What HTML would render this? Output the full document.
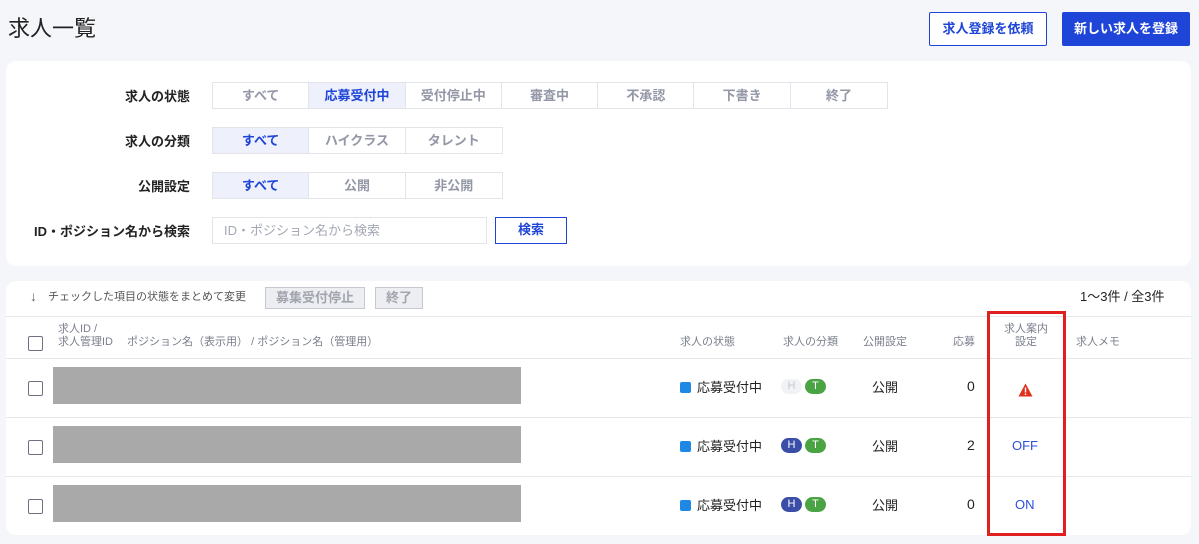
<!DOCTYPE html>
<html><head><meta charset="utf-8"><style>
*{box-sizing:border-box;margin:0;padding:0}
body{width:1199px;height:544px;background:#f5f6fa;font-family:"Liberation Sans","Noto Sans CJK JP",sans-serif;position:relative;overflow:hidden;color:#222;line-height:1.2}
.a{position:absolute}
.card{position:absolute;background:#fff;border-radius:10px;left:6px;width:1185px}
.lbl{position:absolute;right:1009px;font-size:13px;font-weight:bold;color:#222;text-align:right;white-space:nowrap}
.seg{position:absolute;left:212px;display:flex;border:1px solid #e2e4ea;height:27px}
.seg div{width:96.3px;border-right:1px solid #e2e4ea;font-size:13px;font-weight:bold;color:#9397a6;text-align:center;line-height:25px}
.seg div:last-child{border-right:none}
.seg .on{background:#eef1fb;color:#1f45d8}
.hd{position:absolute;font-size:11px;color:#7b7f8c;white-space:nowrap}
.cb{position:absolute;left:28px;width:15px;height:15px;border:1px solid #6e7280;border-radius:2px;background:#fff}
.gray{position:absolute;left:53px;width:468px;height:37px;background:#a9a9a9}
.line{position:absolute;left:6px;width:1185px;height:1px;background:#e6e8ee}
.cell{position:absolute;font-size:13px;color:#222;white-space:nowrap}
.sq{display:inline-block;width:11px;height:11px;background:#1e88e5;border-radius:2px;margin-right:6px;vertical-align:-1px}
.pills{position:absolute;left:781px;display:flex;gap:3px}
.pill{width:21px;height:15px;border-radius:8px;font-size:11px;color:#fff;text-align:center;line-height:15px}
</style></head><body>
<div class="a" style="left:8px;top:16px;font-size:22px;color:#222">求人一覧</div>
<div class="a" style="left:929px;top:12px;width:118px;height:34px;border:1.5px solid #1f45d8;background:#fff;color:#1f45d8;font-size:13px;font-weight:bold;text-align:center;line-height:31px;border-radius:2px">求人登録を依頼</div>
<div class="a" style="left:1062px;top:12px;width:128px;height:34px;background:#1f45d8;color:#fff;font-size:13px;font-weight:bold;text-align:center;line-height:34px;border-radius:2px">新しい求人を登録</div>

<div class="card" style="top:61px;height:205px"></div>
<div class="lbl" style="top:89px">求人の状態</div>
<div class="seg" style="top:82px"><div>すべて</div><div class="on">応募受付中</div><div>受付停止中</div><div>審査中</div><div>不承認</div><div>下書き</div><div>終了</div></div>
<div class="lbl" style="top:134px">求人の分類</div>
<div class="seg" style="top:127px"><div class="on">すべて</div><div>ハイクラス</div><div>タレント</div></div>
<div class="lbl" style="top:179px">公開設定</div>
<div class="seg" style="top:172px"><div class="on">すべて</div><div>公開</div><div>非公開</div></div>
<div class="lbl" style="top:224px">ID・ポジション名から検索</div>
<div class="a" style="left:212px;top:217px;width:275px;height:27px;border:1px solid #e2e4ea;font-size:13px;color:#a4a8b4;padding-left:11px;line-height:25px">ID・ポジション名から検索</div>
<div class="a" style="left:495px;top:217px;width:72px;height:27px;border:1.5px solid #1f45d8;color:#1f45d8;font-size:13px;font-weight:bold;text-align:center;line-height:24px">検索</div>

<div class="card" style="top:281px;height:254px"></div>
<div class="a" style="left:30px;top:288px;font-size:14px;color:#666">↓</div>
<div class="a" style="left:48px;top:291px;font-size:11px;color:#555">チェックした項目の状態をまとめて変更</div>
<div class="a" style="left:265px;top:287px;width:100px;height:22px;border:1px solid #c6c8cf;background:#eceef2;color:#a2a5ae;font-size:13px;font-weight:bold;text-align:center;line-height:20px">募集受付停止</div>
<div class="a" style="left:375px;top:287px;width:48px;height:22px;border:1px solid #c6c8cf;background:#eceef2;color:#a2a5ae;font-size:13px;font-weight:bold;text-align:center;line-height:20px">終了</div>
<div class="a" style="left:1080px;top:289px;font-size:13px;color:#222">1〜3件 / 全3件</div>
<div class="line" style="top:316px"></div>
<div class="cb" style="top:336px"></div>
<div class="hd" style="left:58px;top:323px">求人ID /</div>
<div class="hd" style="left:58px;top:336px">求人管理ID　 ポジション名（表示用） / ポジション名（管理用）</div>
<div class="hd" style="left:680px;top:336px">求人の状態</div>
<div class="hd" style="left:783px;top:336px">求人の分類</div>
<div class="hd" style="left:863px;top:336px">公開設定</div>
<div class="hd" style="left:953px;top:336px">応募</div>
<div class="hd" style="left:1004px;top:323px;text-align:center;line-height:13px">求人案内<br>設定</div>
<div class="hd" style="left:1076px;top:336px">求人メモ</div>
<div class="line" style="top:358px"></div>
<div class="line" style="top:417px"></div>
<div class="line" style="top:476px"></div>

<div class="cb" style="top:381px"></div><div class="gray" style="top:367px"></div>
<div class="cb" style="top:440px"></div><div class="gray" style="top:426px"></div>
<div class="cb" style="top:499px"></div><div class="gray" style="top:485px"></div>

<div class="cell" style="left:680px;top:380px"><span class="sq"></span>応募受付中</div>
<div class="cell" style="left:680px;top:439px"><span class="sq"></span>応募受付中</div>
<div class="cell" style="left:680px;top:498px"><span class="sq"></span>応募受付中</div>
<div class="pills" style="top:379px"><div class="pill" style="background:#f1f2f6;color:#c4c7d0">H</div><div class="pill" style="background:#4aa444">T</div></div>
<div class="pills" style="top:438px"><div class="pill" style="background:#3a4ea8">H</div><div class="pill" style="background:#4aa444">T</div></div>
<div class="pills" style="top:497px"><div class="pill" style="background:#3a4ea8">H</div><div class="pill" style="background:#4aa444">T</div></div>
<div class="cell" style="left:872px;top:380px">公開</div>
<div class="cell" style="left:872px;top:439px">公開</div>
<div class="cell" style="left:872px;top:498px">公開</div>
<div class="cell" style="left:967px;top:378px;font-size:14px">0</div>
<div class="cell" style="left:967px;top:437px;font-size:14px">2</div>
<div class="cell" style="left:967px;top:496px;font-size:14px">0</div>
<svg class="a" style="left:1018px;top:383px" width="15" height="14" viewBox="0 0 15 14"><path d="M7.5 0.5L14.5 13.5H0.5Z" fill="#e0301e"/><rect x="6.8" y="4.5" width="1.4" height="5" fill="#fff"/><rect x="6.8" y="10.5" width="1.4" height="1.5" fill="#fff"/></svg>
<div class="cell" style="left:1012px;top:438px;color:#2d4fe0">OFF</div>
<div class="cell" style="left:1015px;top:497px;color:#2d4fe0">ON</div>
<div class="a" style="left:987px;top:311px;width:79px;height:225px;border:3px solid #e0201e"></div>
</body></html>
